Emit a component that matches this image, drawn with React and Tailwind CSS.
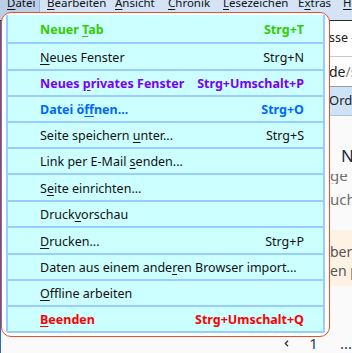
import { Fragment } from 'react'

// Datei menu of the browser, drawn over the page
const entries = [
  { text: 'Neuer Tab', ak: 6, keys: 'Strg+T', tone: 'text-[#33cc00] font-bold', h: 'h-[29px]' },
  { text: 'Neues Fenster', ak: 0, keys: 'Strg+N', tone: 'text-[#111]', h: 'h-[27px]' },
  { text: 'Neues privates Fenster', ak: 6, keys: 'Strg+Umschalt+P', tone: 'text-[#7700ff] font-bold', h: 'h-[26px]' },
  { text: 'Datei öffnen...', ak: 7, keys: 'Strg+O', tone: 'text-[#0066ff] font-bold', h: 'h-[26px]' },
  { text: 'Seite speichern unter...', ak: 16, keys: 'Strg+S', tone: 'text-[#111]', h: 'h-[26px]' },
  { text: 'Link per E-Mail senden...', ak: 16, keys: '', tone: 'text-[#111]', h: 'h-[26px]' },
  { text: 'Seite einrichten...', ak: 1, keys: '', tone: 'text-[#111]', h: 'h-[27px]' },
  { text: 'Druckvorschau', ak: 5, keys: '', tone: 'text-[#111]', h: 'h-[26px]' },
  { text: 'Drucken...', ak: 0, keys: 'Strg+P', tone: 'text-[#111]', h: 'h-[27px]' },
  { text: 'Daten aus einem anderen Browser import...', ak: 20, keys: '', tone: 'text-[#111]', h: 'h-[26px]' },
  { text: 'Offline arbeiten', ak: 0, keys: '', tone: 'text-[#111]', h: 'h-[26px]' },
  { text: 'Beenden', ak: 0, keys: 'Strg+Umschalt+Q', tone: 'text-[#ff0000] font-bold', h: 'h-[26px]' },
]

const menus = [
  { name: 'Datei', ak: 0, w: 'w-[40px]', active: true },
  { name: 'Bearbeiten', ak: 0, w: 'w-[68px]' },
  { name: 'Ansicht', ak: 0, w: 'w-[53px]' },
  { name: 'Chronik', ak: 0, w: 'w-[55px]' },
  { name: 'Lesezeichen', ak: 0, w: 'w-[75px]' },
  { name: 'Extras', ak: 1, w: 'w-[45px]' },
  { name: 'Hilfe', ak: 0, w: 'w-[40px]' },
]

function Access({ text, ak }) {
  return (
    <>
      {text.slice(0, ak)}
      <span className="underline underline-offset-2 decoration-1">{text[ak]}</span>
      {text.slice(ak + 1)}
    </>
  )
}

function FileMenu() {
  return (
    <div className="absolute left-[1px] top-[12px] w-[329px] h-[325px] rounded-[10px] border border-[#e8502a] bg-white pl-[4px] pr-[4px] pt-[2px] pb-[3px]">
      <div className="flex flex-col border-x-2 border-[#99ccff] bg-[#ccffff] text-[12.5px] rounded-b-[2px]">
        {entries.map((e, i) => (
          <div
            key={i}
            className={`${e.h} ${e.tone} flex items-center justify-between border-b-2 border-[#99ccff] pl-[32px] pr-[19px] pt-[3px] whitespace-nowrap`}
          >
            <span><Access text={e.text} ak={e.ak} /></span>
            {e.keys && <span>{e.keys}</span>}
          </div>
        ))}
      </div>
    </div>
  )
}

export default function App() {
  return (
    <div className="relative w-[352px] h-[353px] overflow-hidden bg-[#fafafa] font-['Noto_Sans',sans-serif]">
      {/* menu bar, its top is scrolled off */}
      <div className="h-[20px] flex bg-[#d4e4f6] text-[11.5px] text-[#111] overflow-hidden">
        {menus.map((m) => (
          <div
            key={m.name}
            className={`${m.w} shrink-0 pl-[7px] whitespace-nowrap ${m.active ? 'bg-[#bccfe8] border-r border-[#9db7d8]' : ''}`}
          >
            <div className="leading-[12px] -mt-[3px]">
              <Access text={m.name} ak={m.ak} />
            </div>
          </div>
        ))}
      </div>
      <div className="h-px bg-[#2b2b2b]" />

      <div className="border-l border-[#2a68c8] h-[332px] flex flex-col">
        {/* tab strip */}
        <div className="h-[36px] bg-white border-b border-[#c8c8c8] flex items-center pl-[328px] text-[12.5px] text-[#222] whitespace-nowrap">
          sse - Mozilla
        </div>
        {/* address bar */}
        <div className="h-[30px] bg-white border-b border-[#9a9a9a] flex items-center pl-[328px] text-[14px] whitespace-nowrap">
          <span className="text-[#222]">de</span>
          <span className="text-[#777]">/suche</span>
        </div>
        {/* bookmarks bar */}
        <div className="h-[29px] bg-[#cfe3f6] border-b border-[#a9c3e0] flex items-center pl-[328px] text-[13px] text-[#222] whitespace-nowrap">
          Ordner
        </div>
        {/* page */}
        <div className="flex-1 flex flex-col bg-[#fafafa]">
          <div className="h-[56px] flex items-end pl-[340px] pb-[4px] text-[17px] text-[#1d2a48] whitespace-nowrap">
            Neu
          </div>
          <div className="pl-[329px] text-[15px] leading-[18px] text-[#6e6e6e] whitespace-nowrap h-[58px] pt-[2px]">
            <div className="h-[10px] overflow-hidden flex items-end">ge</div>
            <div className="mt-[6px]">uch</div>
          </div>
          <div className="h-[56px] bg-[#fdf3e4] pl-[329px] pt-[12px] text-[14px] leading-[19px] text-[#555] whitespace-nowrap">
            <div>ber</div>
            <div>en p</div>
          </div>
          <div className="flex-1 flex items-end pb-[1px] pl-[283px] gap-[20px] text-[15px] text-[#2a3a5a] whitespace-nowrap">
            <svg width="12" height="15" viewBox="0 0 12 15" className="mb-[1px]">
              <polyline points="9,1.5 3,7.5 9,13.5" fill="none" stroke="#333" strokeWidth="3" />
            </svg>
            <span className="leading-[17px]">1</span>
            <span className="leading-[17px] ml-[2px]">...</span>
          </div>
        </div>
      </div>

      <FileMenu />
    </div>
  )
}
